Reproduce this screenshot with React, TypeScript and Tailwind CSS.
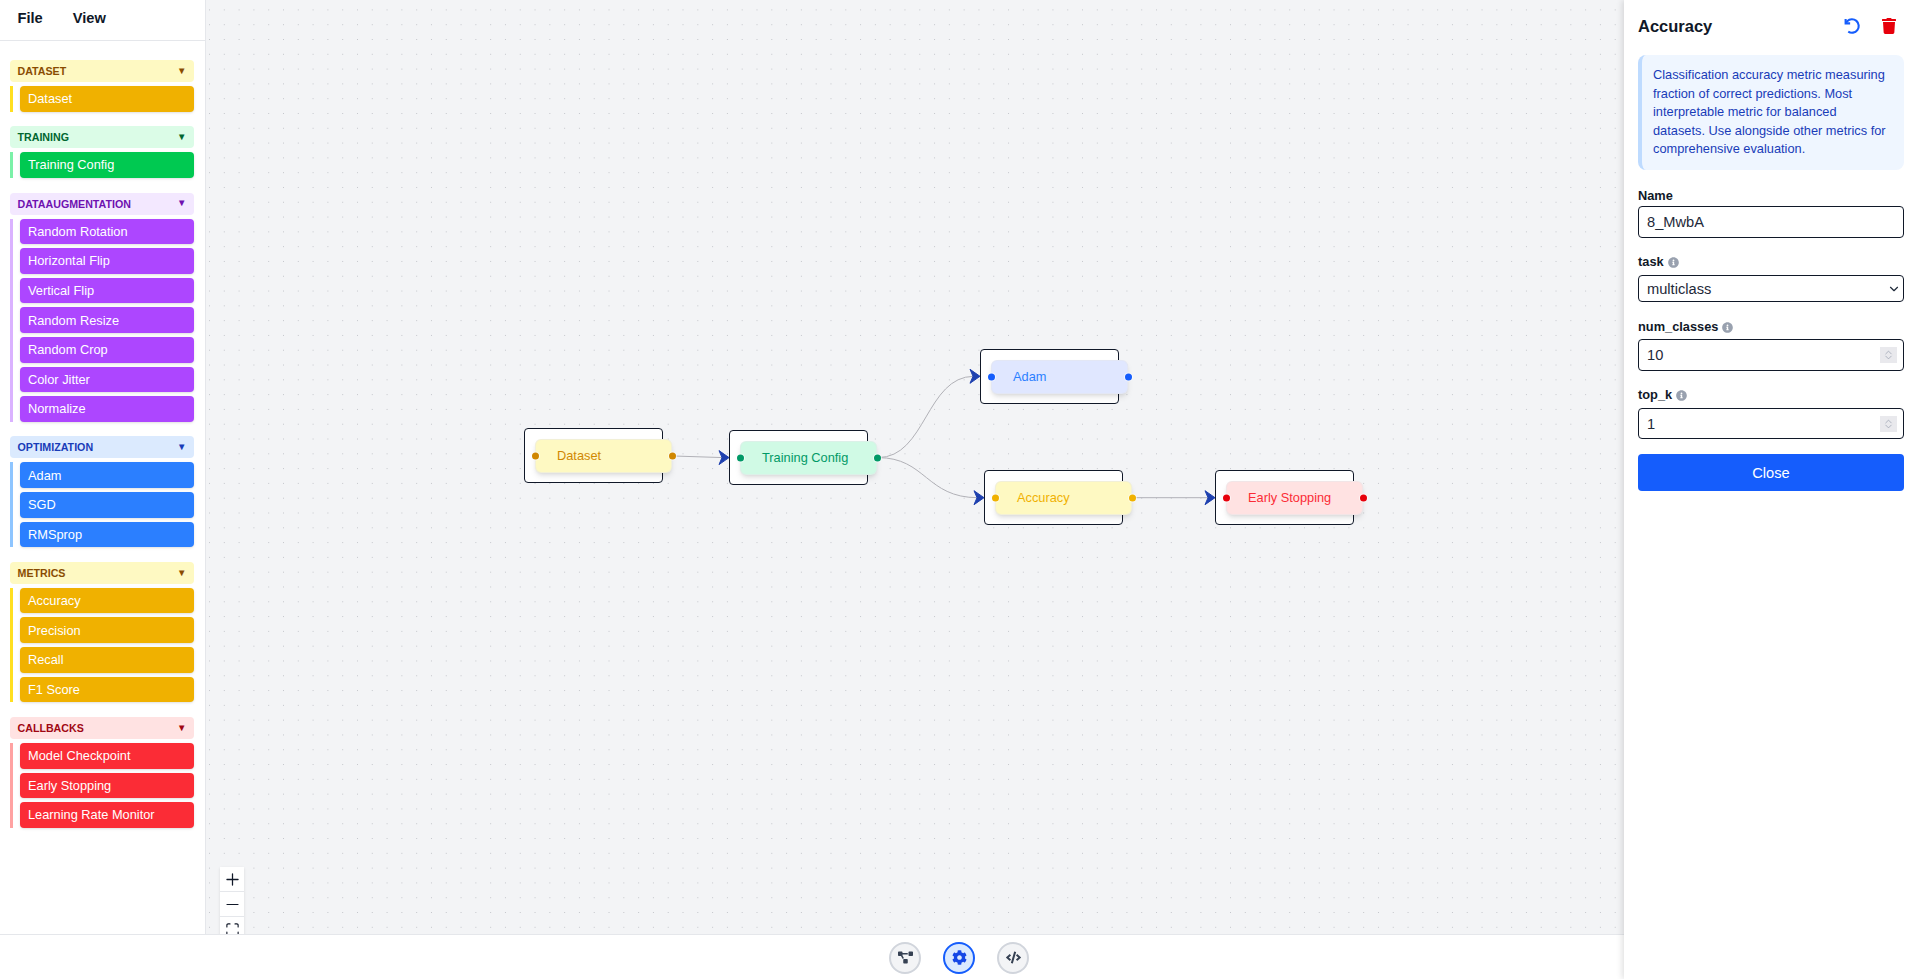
import React from 'react';
import { ChevronDown, ChevronUp, Plus, Minus, Maximize } from 'lucide-react';
import { FaTrash, FaInfoCircle, FaProjectDiagram, FaCog, FaCode } from 'react-icons/fa';

const sections = [
    { title: 'DATASET', head: 'bg-yellow-100 text-yellow-800', bar: 'bg-yellow-300', item: 'bg-yellow-500', items: ['Dataset'] },
    { title: 'TRAINING', head: 'bg-green-100 text-green-800', bar: 'bg-green-300', item: 'bg-green-500', items: ['Training Config'] },
    { title: 'DATAAUGMENTATION', head: 'bg-purple-100 text-purple-800', bar: 'bg-purple-300', item: 'bg-purple-500', items: ['Random Rotation', 'Horizontal Flip', 'Vertical Flip', 'Random Resize', 'Random Crop', 'Color Jitter', 'Normalize'] },
    { title: 'OPTIMIZATION', head: 'bg-blue-100 text-blue-800', bar: 'bg-blue-300', item: 'bg-blue-500', items: ['Adam', 'SGD', 'RMSprop'] },
    { title: 'METRICS', head: 'bg-yellow-100 text-yellow-800', bar: 'bg-yellow-300', item: 'bg-yellow-500', items: ['Accuracy', 'Precision', 'Recall', 'F1 Score'] },
    { title: 'CALLBACKS', head: 'bg-red-100 text-red-800', bar: 'bg-red-300', item: 'bg-red-500', items: ['Model Checkpoint', 'Early Stopping', 'Learning Rate Monitor'] },
];

const nodes = [
    { label: 'Dataset', pos: 'left-[318px] top-[428px]', inner: 'bg-yellow-100 text-yellow-600', dot: 'bg-yellow-600' },
    { label: 'Training Config', pos: 'left-[523px] top-[430px]', inner: 'bg-emerald-100 text-emerald-600', dot: 'bg-emerald-600' },
    { label: 'Adam', pos: 'left-[774px] top-[349px]', inner: 'bg-indigo-100 text-blue-500', dot: 'bg-blue-600' },
    { label: 'Accuracy', pos: 'left-[778px] top-[470px]', inner: 'bg-yellow-100 text-yellow-500', dot: 'bg-yellow-500' },
    { label: 'Early Stopping', pos: 'left-[1009px] top-[470px]', inner: 'bg-red-100 text-red-500', dot: 'bg-red-600' },
];

const Arrow = ({ x, y }: { x: number; y: number }) => (
    <path d={`M${x - 10} ${y - 7} L${x} ${y} L${x - 10} ${y + 7} L${x - 7} ${y} Z`} fill="#1e40af" stroke="#1e40af" strokeWidth="1" strokeLinejoin="round" />
);

const Info = () => <FaInfoCircle className="ml-1 inline-block text-[11px] text-gray-400" />;

const inputCls = 'h-full w-full rounded border border-gray-900 bg-white px-2 text-[14.67px] text-gray-800 outline-none [appearance:textfield]';

// spinner drawn over the number inputs
const Spinner = () => (
    <span className="absolute right-[7px] top-1/2 flex h-4 w-[17px] -translate-y-1/2 flex-col items-center justify-center bg-[#e9e9ed] text-gray-400">
        <ChevronUp size={13} strokeWidth={1.6} className="-mb-[3px]" />
        <ChevronDown size={13} strokeWidth={1.6} className="-mt-[3px]" />
    </span>
);

const App: React.FC = () => {
    return (
        <div className="relative flex h-[979px] w-[1914px] flex-col overflow-hidden bg-white font-['Liberation_Sans',sans-serif]">
            <div className="flex h-[934px] flex-1">
                {/* Sidebar */}
                <aside className="h-full w-[206px] shrink-0 border-r border-gray-200 bg-white">
                    <div className="flex h-[41px] items-start gap-[30px] border-b border-gray-200 px-[17.5px] pt-[7px] text-[14.67px] font-bold text-gray-900">
                        <span>File</span>
                        <span>View</span>
                    </div>
                    <div className="pl-[10px] pr-[11px] pt-[19px]">
                        {sections.map((s) => (
                            <div key={s.title} className="mb-[14.7px]">
                                <div className={`flex h-[22px] items-center justify-between rounded px-[7.5px] text-[10.67px] font-bold ${s.head}`}>
                                    <span>{s.title}</span>
                                    <span className="text-[9.5px]">▼</span>
                                </div>
                                <div className="relative mt-1 flex flex-col gap-1 pl-[10px]">
                                    <div className={`absolute bottom-0 left-0 top-0 w-[3px] ${s.bar}`} />
                                    {s.items.map((name) => (
                                        <div key={name} className={`flex h-[25.6px] items-center rounded px-2 text-[12.8px] text-white shadow-sm ${s.item}`}>
                                            {name}
                                        </div>
                                    ))}
                                </div>
                            </div>
                        ))}
                    </div>
                </aside>

                {/* Canvas */}
                <main className="relative flex-1 overflow-hidden bg-gray-100 bg-[radial-gradient(#c4c6cb_0.8px,transparent_0.8px)] bg-[size:14.8px_14.8px] bg-[position:-3.9px_2.5px]">
                    <svg className="absolute left-0 top-0 h-full w-full" fill="none">
                        <path d="M468 456 L517 457.6" stroke="#b1b1b7" strokeWidth="1" />
                        <path d="M672 457.6 C 720 457.6, 720 376.3, 768 376.3" stroke="#b1b1b7" strokeWidth="1" />
                        <path d="M672 457.6 C 720 457.6, 720 497.7, 772 497.7" stroke="#b1b1b7" strokeWidth="1" />
                        <path d="M927 497.7 L1003 497.7" stroke="#b1b1b7" strokeWidth="1" />
                        <Arrow x={523} y={457.6} />
                        <Arrow x={774} y={376.3} />
                        <Arrow x={778} y={497.7} />
                        <Arrow x={1009} y={497.7} />
                    </svg>
                    {nodes.map((n) => (
                        <div key={n.label} className={`absolute h-[55px] w-[139px] rounded-sm border border-gray-900 bg-white ${n.pos}`}>
                            <div className={`absolute left-[10px] top-[9.5px] flex h-[34px] w-[137px] items-center rounded-md border border-gray-200/50 pl-[21px] text-[12.8px] shadow-md ${n.inner}`}>
                                {n.label}
                                <span className={`absolute -left-[4.5px] top-1/2 size-[7px] -translate-y-1/2 rounded-full ring-1 ring-white/60 ${n.dot}`} />
                                <span className={`absolute -right-[4.5px] top-1/2 size-[7px] -translate-y-1/2 rounded-full ring-1 ring-white/60 ${n.dot}`} />
                            </div>
                        </div>
                    ))}

                    {/* Zoom controls */}
                    <div className="absolute left-[14px] top-[867px] flex w-[24px] flex-col bg-white shadow-sm">
                        <button className="flex h-[25px] items-center justify-center border-b border-gray-200 text-gray-900"><Plus size={19} strokeWidth={1.6} /></button>
                        <button className="flex h-[25px] items-center justify-center border-b border-gray-200 text-gray-900"><Minus size={19} strokeWidth={1.3} /></button>
                        <button className="flex h-[25px] items-center justify-center text-gray-900"><Maximize size={15} strokeWidth={1.8} /></button>
                    </div>
                </main>
            </div>

            {/* Bottom bar */}
            <div className="relative flex h-[45px] shrink-0 items-center justify-center gap-[22px] border-t border-gray-200 bg-white pl-[4px] pt-[1px]">
                <button className="flex size-8 items-center justify-center rounded-full border-2 border-gray-300 bg-gray-100 text-gray-700"><FaProjectDiagram size={15} /></button>
                <button className="flex size-8 items-center justify-center rounded-full border-2 border-blue-600 bg-blue-100 text-blue-700"><FaCog size={15} /></button>
                <button className="flex size-8 items-center justify-center rounded-full border-2 border-gray-300 bg-gray-100 text-gray-700"><FaCode size={15} /></button>
            </div>

            {/* Properties panel */}
            <div className="absolute bottom-0 right-0 top-0 flex w-[290px] flex-col bg-white pl-[14px] pr-[10px] shadow-[-2px_0_6px_rgba(0,0,0,0.12)]">
                <div className="flex h-[55px] items-center justify-between pb-[2px]">
                    <h2 className="text-[16.5px] font-bold text-gray-900">Accuracy</h2>
                    <div className="flex items-center gap-[20px] pb-[2px] pr-[7px]">
                        <svg width="18" height="18" viewBox="0 0 24 24" fill="none" stroke="currentColor" strokeWidth="2.8" className="text-blue-600">
                            <path d="M7 19.5 A9 9 0 1 0 5.6 5.6 L3.5 8" />
                            <path d="M3.5 2.5 V8.5 H9.5" />
                        </svg>
                        <FaTrash size={16} className="text-red-600" />
                    </div>
                </div>
                <div className="h-[115px] rounded-lg border-l-4 border-blue-200 bg-blue-50 py-[11px] pl-[11px] pr-[14px] text-[12.8px] leading-[18.5px] text-blue-800">
                    Classification accuracy metric measuring fraction of correct predictions. Most interpretable metric for balanced datasets. Use alongside other metrics for comprehensive evaluation.
                </div>

                <label className="mt-[18px] block text-[12.8px] font-bold leading-[15px] text-gray-900">Name</label>
                <div className="mt-[3px] h-[32px]">
                    <input readOnly value="8_MwbA" className={inputCls} />
                </div>

                <label className="mt-[16px] block text-[12.8px] font-bold leading-[15px] text-gray-900">task<Info /></label>
                <div className="relative mt-[6px] h-[27px]">
                    <select defaultValue="multiclass" className="h-full w-full appearance-none rounded border border-gray-900 bg-white px-2 text-[14.67px] text-gray-800 outline-none">
                        <option value="multiclass">multiclass</option>
                    </select>
                    <ChevronDown size={14} strokeWidth={2} className="pointer-events-none absolute right-[3px] top-[7px] text-gray-800" />
                </div>

                <label className="mt-[17px] block text-[12.8px] font-bold leading-[15px] text-gray-900">num_classes<Info /></label>
                <div className="relative mt-[5px] h-[32px]">
                    <input readOnly type="number" value="10" className={inputCls} />
                    <Spinner />
                </div>

                <label className="mt-[16px] block text-[12.8px] font-bold leading-[15px] text-gray-900">top_k<Info /></label>
                <div className="relative mt-[6px] h-[31px]">
                    <input readOnly type="number" value="1" className={inputCls} />
                    <Spinner />
                </div>

                <button className="mt-[15px] h-[37px] w-full rounded bg-blue-600 text-[14.67px] text-white">Close</button>
            </div>
        </div>
    );
};

export default App;
